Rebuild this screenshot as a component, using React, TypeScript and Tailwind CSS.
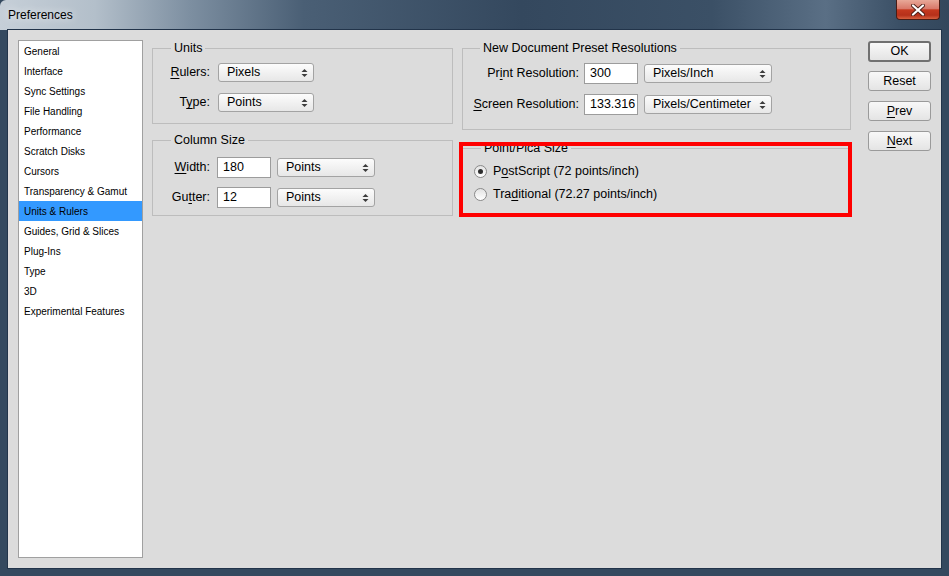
import type { ReactNode } from "react";

const items = [
  "General",
  "Interface",
  "Sync Settings",
  "File Handling",
  "Performance",
  "Scratch Disks",
  "Cursors",
  "Transparency & Gamut",
  "Units & Rulers",
  "Guides, Grid & Slices",
  "Plug-Ins",
  "Type",
  "3D",
  "Experimental Features",
];

const Mn = ({ children }: { children: ReactNode }) => (
  <span className="underline underline-offset-2">{children}</span>
);

const Arrows = () => (
  <svg width="7" height="10" viewBox="0 0 7 10" className="shrink-0">
    <polygon points="0.5,4 3.5,1 6.5,4" fill="#3c3c3c" />
    <polygon points="0.5,6 3.5,9 6.5,6" fill="#3c3c3c" />
  </svg>
);

const Select = ({ value, width }: { value: string; width: string }) => (
  <div
    className={`${width} h-[19px] flex items-center justify-between pl-[8px] pr-[5px] rounded-[3px] border border-[#a3a3a3] bg-[linear-gradient(180deg,#fcfcfc,#e7e7e7)] text-[12.5px] leading-none text-black`}
  >
    <span>{value}</span>
    <Arrows />
  </div>
);

const Input = ({ value }: { value: string }) => (
  <div className="w-[54px] h-[21px] flex items-center pl-[5px] border border-[#9c9c9c] bg-white text-[12.5px] leading-none text-black">
    {value}
  </div>
);

const Legend = ({ children, offset }: { children: ReactNode; offset: string }) => (
  <span
    className={`${offset} -mt-[9px] h-[16px] w-fit px-[3px] bg-[#dcdcdc] text-[12.5px] leading-[16px] text-black`}
  >
    {children}
  </span>
);

const Radio = ({ checked }: { checked?: boolean }) => (
  <span className="w-[13px] h-[13px] shrink-0 rounded-full border border-[#8a8a8a] bg-[linear-gradient(180deg,#e3e3e3,#ffffff)] flex items-center justify-center">
    {checked && <span className="w-[5px] h-[5px] rounded-full bg-[#2e2e2e]" />}
  </span>
);

const Button = ({ children, primary }: { children: ReactNode; primary?: boolean }) => (
  <div
    className={
      primary
        ? "h-[21px] flex items-center justify-center rounded-[3px] border-2 border-[#707070] bg-[linear-gradient(180deg,#f8f8f8,#e4e4e4)] text-[12.5px] text-black"
        : "h-[20px] flex items-center justify-center rounded-[3px] border border-[#9a9a9a] bg-[linear-gradient(180deg,#f8f8f8,#e4e4e4)] text-[12.5px] text-black"
    }
  >
    {children}
  </div>
);

const TitleBar = () => (
  <div className="h-[30px] shrink-0 flex items-start justify-between rounded-t-[6px] bg-[linear-gradient(90deg,#c6cfd8_0%,#b3bfca_10%,#7d8fa1_20%,#4a5f75_32%,#34485e_55%,#3b5066_75%,#5a6f85_87%,#3a4f65_95%,#33475c_100%)]">
    <span className="pl-[8px] pt-[7px] text-[12px] leading-[16px] text-black [text-shadow:0_0_8px_#ffffff]">
      Preferences
    </span>
    <div className="mr-[9px] w-[44px] h-[20px] flex items-center justify-center rounded-b-[4px] border border-t-0 border-[#4a1c14] bg-[linear-gradient(180deg,#e8a898_0%,#d9796a_45%,#c4391f_52%,#b6301a_80%,#d6603f_100%)]">
      <svg width="14" height="12" viewBox="0 0 14 12">
        <path d="M2 1.5 L12 10.5 M12 1.5 L2 10.5" stroke="#4d2018" strokeWidth="4" strokeLinecap="round" />
        <path d="M2 1.5 L12 10.5 M12 1.5 L2 10.5" stroke="#ffffff" strokeWidth="2.2" strokeLinecap="round" />
      </svg>
    </div>
  </div>
);

export default function App() {
  return (
    <div className="w-[949px] h-[576px] flex flex-col bg-[#34495f] font-['Liberation_Sans',Arial,sans-serif] text-black">
      <TitleBar />
      <div className="mx-[8px] mb-[8px] flex-1 flex bg-[#dcdcdc] pl-[10px] pr-[10px] pt-[10px] pb-[10px] shadow-[0_0_0_1px_#22344a]">
        {/* category list */}
        <div className="w-[125px] flex flex-col border border-[#a0a0a0] bg-white">
          {items.map((item) => (
            <div
              key={item}
              className={
                item === "Units & Rulers"
                  ? "h-[20px] flex items-center pl-[5px] bg-[#3399ff] text-[10px] text-black"
                  : "h-[20px] flex items-center pl-[5px] text-[10px] text-black"
              }
            >
              {item}
            </div>
          ))}
        </div>

        {/* left column */}
        <div className="ml-[9px] mt-[8px] w-[301px] flex flex-col">
          <div className="h-[76px] flex flex-col border border-[#bdbdbd]">
            <Legend offset="ml-[18px]">Units</Legend>
            <div className="mt-[7px] flex items-center gap-[8px]">
              <span className="w-[57px] text-right text-[12.5px]">
                <Mn>R</Mn>ulers:
              </span>
              <Select value="Pixels" width="w-[96px]" />
            </div>
            <div className="mt-[11px] flex items-center gap-[8px]">
              <span className="w-[57px] text-right text-[12.5px]">
                T<Mn>y</Mn>pe:
              </span>
              <Select value="Points" width="w-[96px]" />
            </div>
          </div>

          <div className="mt-[16px] h-[76px] flex flex-col border border-[#bdbdbd]">
            <Legend offset="ml-[18px]">Column Size</Legend>
            <div className="mt-[9px] flex items-center">
              <span className="w-[57px] text-right text-[12.5px]">
                <Mn>W</Mn>idth:
              </span>
              <div className="ml-[7px]">
                <Input value="180" />
              </div>
              <div className="ml-[6px]">
                <Select value="Points" width="w-[98px]" />
              </div>
            </div>
            <div className="mt-[9px] flex items-center">
              <span className="w-[57px] text-right text-[12.5px]">
                Gu<Mn>t</Mn>ter:
              </span>
              <div className="ml-[7px]">
                <Input value="12" />
              </div>
              <div className="ml-[6px]">
                <Select value="Points" width="w-[98px]" />
              </div>
            </div>
          </div>
        </div>

        {/* right column */}
        <div className="ml-[9px] mt-[8px] w-[389px] flex flex-col">
          <div className="h-[82px] flex flex-col border border-[#bdbdbd]">
            <Legend offset="ml-[17px]">New Document Preset Resolutions</Legend>
            <div className="mt-[7px] flex items-center">
              <span className="w-[116px] text-right text-[12.5px]">
                Pr<Mn>i</Mn>nt Resolution:
              </span>
              <div className="ml-[5px]">
                <Input value="300" />
              </div>
              <div className="ml-[6px]">
                <Select value="Pixels/Inch" width="w-[128px]" />
              </div>
            </div>
            <div className="mt-[10px] flex items-center">
              <span className="w-[116px] text-right text-[12.5px]">
                <Mn>S</Mn>creen Resolution:
              </span>
              <div className="ml-[5px]">
                <Input value="133.316" />
              </div>
              <div className="ml-[6px]">
                <Select value="Pixels/Centimeter" width="w-[128px]" />
              </div>
            </div>
          </div>

          <div className="relative mt-[18px] h-[67px] flex flex-col border border-[#bdbdbd]">
            <Legend offset="ml-[18px]">Point/Pica Size</Legend>
            <div className="mt-[7px] h-[16px] flex items-center pl-[11px] gap-[6px] text-[12.5px]">
              <Radio checked />
              <span>
                P<Mn>o</Mn>stScript (72 points/inch)
              </span>
            </div>
            <div className="mt-[7px] h-[16px] flex items-center pl-[11px] gap-[6px] text-[12.5px]">
              <Radio />
              <span>
                Tra<Mn>d</Mn>itional (72.27 points/inch)
              </span>
            </div>
            {/* red annotation box */}
            <div className="absolute -left-[4px] -top-[7px] w-[393px] h-[75px] border-4 border-[#ff0000]" />
          </div>
        </div>

        {/* buttons */}
        <div className="ml-[17px] mt-[1px] w-[63px] flex flex-col">
          <Button primary>OK</Button>
          <div className="mt-[9px]">
            <Button>Reset</Button>
          </div>
          <div className="mt-[10px]">
            <Button>
              <Mn>P</Mn>rev
            </Button>
          </div>
          <div className="mt-[10px]">
            <Button>
              <Mn>N</Mn>ext
            </Button>
          </div>
        </div>
      </div>
    </div>
  );
}
